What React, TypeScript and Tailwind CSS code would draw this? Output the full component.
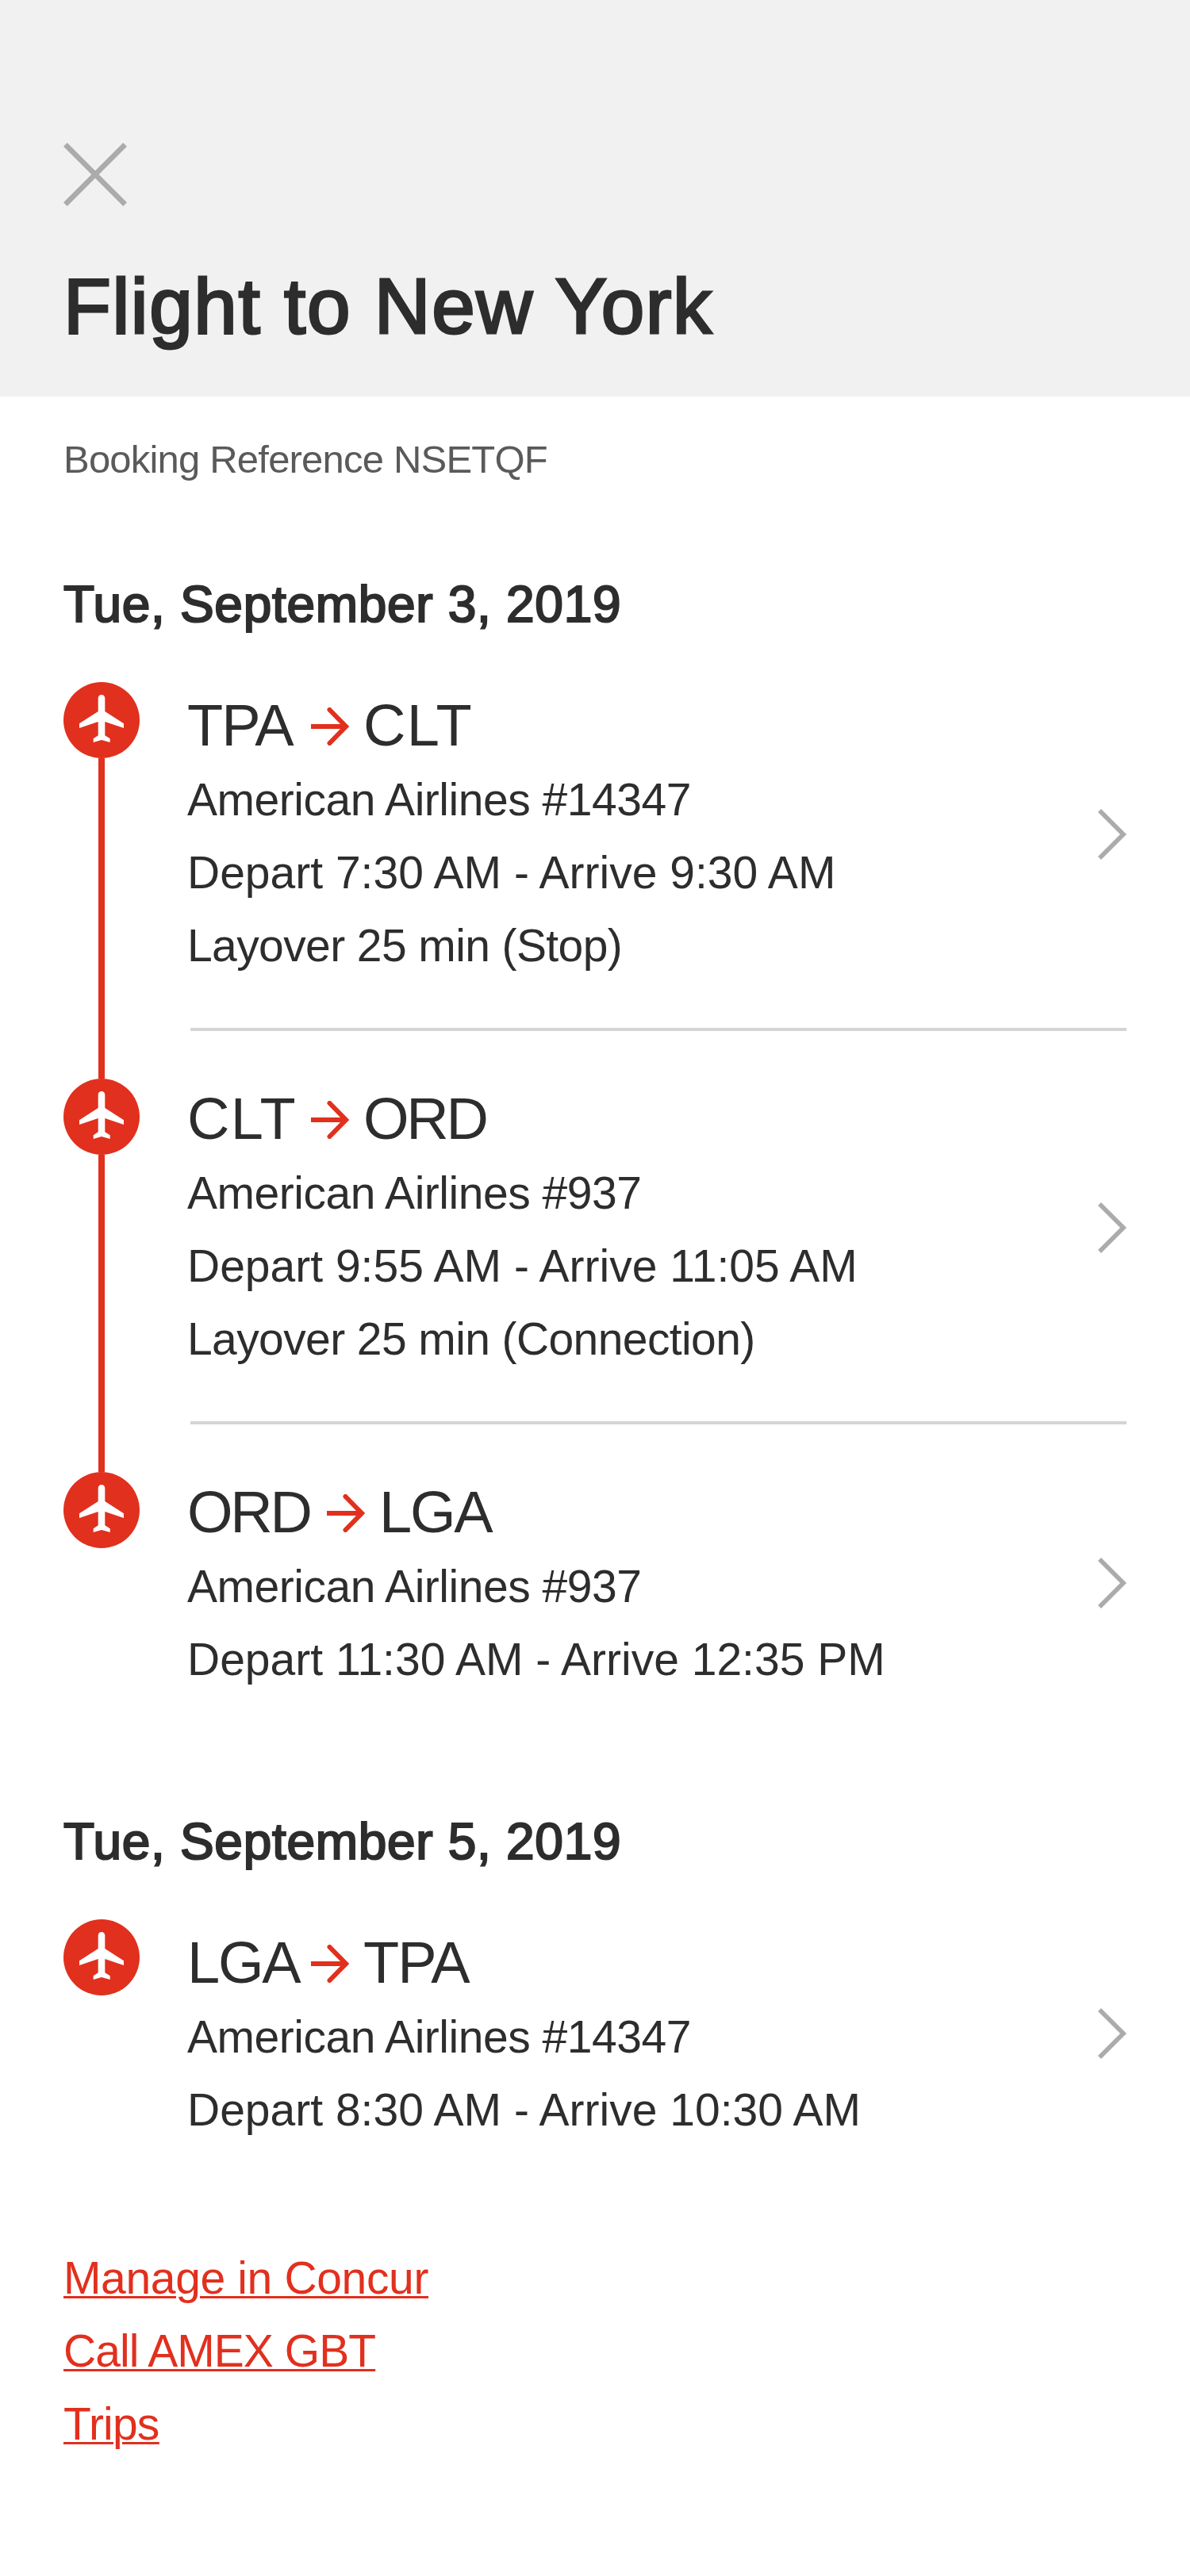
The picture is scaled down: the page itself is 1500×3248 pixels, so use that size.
type Leg = { from: string; to: string; airline: string; times: string; layover?: string };

const days: { date: string; legs: Leg[] }[] = [
  {
    date: "Tue, September 3, 2019",
    legs: [
      {
        from: "TPA",
        to: "CLT",
        airline: "American Airlines #14347",
        times: "Depart 7:30 AM - Arrive 9:30 AM",
        layover: "Layover 25 min (Stop)",
      },
      {
        from: "CLT",
        to: "ORD",
        airline: "American Airlines #937",
        times: "Depart 9:55 AM - Arrive 11:05 AM",
        layover: "Layover 25 min (Connection)",
      },
      {
        from: "ORD",
        to: "LGA",
        airline: "American Airlines #937",
        times: "Depart 11:30 AM - Arrive 12:35 PM",
      },
    ],
  },
  {
    date: "Tue, September 5, 2019",
    legs: [
      {
        from: "LGA",
        to: "TPA",
        airline: "American Airlines #14347",
        times: "Depart 8:30 AM - Arrive 10:30 AM",
      },
    ],
  },
];

const codeTracking: Record<string, string> = {
  TPA: "tracking-[-1.9px]",
  CLT: "tracking-[1.2px]",
  ORD: "tracking-[-3.2px]",
  LGA: "tracking-[-2.2px]",
};

function PlaneBadge() {
  return (
    <svg viewBox="0 0 96 96" className="block size-24 shrink-0">
      <circle cx="48" cy="48" r="48" fill="#e1301e" />
      <path
        fill="#fff"
        d="M48 16c2.600 0 4.300 1.900 4.300 4.500V37L76 52.300V58L52.300 50v17.300l6.400 4V76L48 73l-10.300 3v-4.700l6-4V50L20 58v-5.700L43.700 37V20.500c0-2.600 1.700-4.500 4.300-4.500z"
      />
    </svg>
  );
}

function Arrow() {
  return (
    <svg viewBox="0 0 48 48" className="mt-8 mr-[18px] size-12 shrink-0" fill="none" stroke="#e1301e" strokeWidth="6">
      <path d="M0 24h43" />
      <path d="M23.500 3l20.500 21-20.500 21" strokeLinecap="round" />
    </svg>
  );
}

function LegRow({ leg, first, last }: { leg: Leg; first: boolean; last: boolean }) {
  return (
    <div className={last ? "flex h-[317px]" : "flex h-[496px]"}>
      <div className="flex w-24 shrink-0 flex-col items-center">
        {!first && <div className="h-1 w-2 bg-[#e1301e]" />}
        <PlaneBadge />
        {!last && <div className="w-2 flex-1 bg-[#e1301e]" />}
      </div>
      <div className="ml-[60px] flex flex-1 flex-col">
        <div className={leg.layover ? "flex h-96 items-center" : "flex h-72 items-center"}>
          <div className="flex-1 self-start text-[57px] leading-[92px] whitespace-nowrap">
            <div className="flex h-[102px] items-start text-[74px] leading-[109px]">
              <span className={`${leg.from === "ORD" ? "w-[176px]" : "w-[156px]"} ${codeTracking[leg.from]}`}>
                {leg.from}
              </span>
              <Arrow />
              <span className={codeTracking[leg.to]}>{leg.to}</span>
            </div>
            <div className="tracking-[-0.48px]">{leg.airline}</div>
            <div>{leg.times}</div>
            {leg.layover && <div className="tracking-[-0.6px]">{leg.layover}</div>}
          </div>
          <svg viewBox="0 0 36 64" className="h-16 w-9 shrink-0" fill="none" stroke="#ababab" strokeWidth="5.660">
            <path d="M2 2l30 30L2 62" />
          </svg>
        </div>
        {!last && <div className="mt-[52px] ml-1 h-1 bg-[#d4d4d4]" />}
      </div>
    </div>
  );
}

export default function App() {
  return (
    <main className="h-[3248px] w-[1500px] overflow-hidden bg-white font-['Liberation_Sans',Arial,sans-serif] text-[#2d2d2d]">
      <header className="h-[500px] bg-[#f1f1f1] px-20 pt-[180px]">
        <svg viewBox="0 0 80 80" className="size-20" fill="none" stroke="#ababab" strokeWidth="6.600">
          <path d="M2.400 2.400l75.200 75.200M77.600 2.400L2.400 77.600" />
        </svg>
        <h1 className="mt-[68px] text-[98px] leading-[116px] font-normal tracking-[1.6px] [-webkit-text-stroke:3px_#2d2d2d]">
          Flight to New York
        </h1>
      </header>
      <div className="px-20">
        <p className="pt-[49px] text-[49px] leading-[60px] tracking-[-0.8px] text-[#5a5a5a]">
          Booking Reference NSETQF
        </p>
        {days.map((d) => (
          <section key={d.date} className="pt-[113px]">
            <h2 className="mb-[58px] text-[64px] leading-[80px] font-normal tracking-[0.7px] [-webkit-text-stroke:2.2px_#2d2d2d]">
              {d.date}
            </h2>
            {d.legs.map((l, i) => (
              <LegRow key={i} leg={l} first={i === 0} last={i === d.legs.length - 1} />
            ))}
          </section>
        ))}
        <nav className="mt-[89px] flex flex-col items-start text-[57px] leading-[92px] text-[#e1301e] underline decoration-[3px] underline-offset-[3px]">
          <a className="tracking-[-0.36px]">Manage in Concur</a>
          <a className="tracking-[-0.95px]">Call AMEX GBT</a>
          <a className="tracking-[-0.8px]">Trips</a>
        </nav>
      </div>
    </main>
  );
}
